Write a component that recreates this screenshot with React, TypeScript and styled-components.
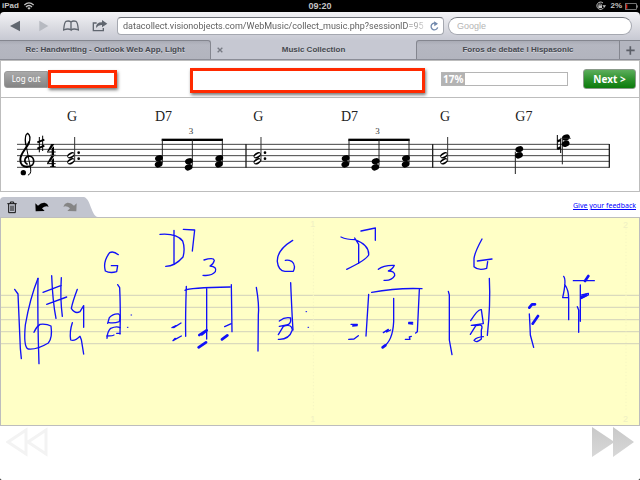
import React from 'react';
import styled, { createGlobalStyle } from 'styled-components';

const Global = createGlobalStyle`
  * { box-sizing: border-box; }
  body { margin: 0; background: #000; font-family: "Liberation Sans", Arial, sans-serif; }
  button, input { font: inherit; margin: 0; padding: 0; border: 0; background: none; }
  svg { display: block; }
`;

const Screen = styled.div`
  min-height: 100vh;
  display: flex;
  flex-direction: column;
`;

const StatusBar = styled.div`
  display: grid;
  grid-template-columns: 1fr auto 1fr;
  align-items: center;
  height: 12px;
  padding: 0 2px;
  color: #c4c4c4;
  font-size: 9px;
  line-height: 12px;
  font-weight: bold;
`;

const StatusGroup = styled.div<{ $end?: boolean }>`
  display: flex;
  align-items: center;
  justify-content: ${p => (p.$end ? 'flex-end' : 'flex-start')};
  gap: ${p => (p.$end ? 3 : 5)}px;
  font-size: 8px;
`;

const Toolbar = styled.div`
  display: grid;
  grid-template-columns: 112px minmax(0, 327fr) minmax(0, 184fr);
  column-gap: 4px;
  align-items: center;
  height: 28px;
  padding: 0 8px 0 1px;
  background: linear-gradient(#f3f3f6, #dcdde3 50%, #c7c9d3);
  border-radius: 4px 4px 0 0;
`;

const ToolButtons = styled.div`
  display: flex;
`;

const IconButton = styled.button`
  display: flex;
  flex: 1;
  height: 24px;
  align-items: center;
  justify-content: center;
`;

const Field = styled.label<{ $round?: boolean }>`
  display: flex;
  align-items: center;
  height: 18px;
  padding: 0 4px 0 ${p => (p.$round ? 8 : 5)}px;
  background: #fff;
  border: 1px solid #a5a8b0;
  border-top-color: #70737a;
  border-radius: ${p => (p.$round ? 9 : 4)}px;
`;

const AddressInput = styled.input`
  flex: 1;
  min-width: 0;
  height: 14px;
  font-family: Roboto, "Liberation Sans", sans-serif;
  font-size: 9px;
  line-height: 14px;
  color: #606060;
  outline: 0;
  mask-image: linear-gradient(90deg, #000 calc(100% - 24px), transparent);
`;

const SearchInput = styled.input`
  flex: 1;
  min-width: 0;
  height: 14px;
  font-size: 9px;
  line-height: 14px;
  outline: 0;
  &::placeholder { color: #b4b4b4; opacity: 1; }
`;

const Tabs = styled.nav`
  display: grid;
  grid-template-columns: 211fr 205fr 204fr 20px;
  height: 20px;
  background: #c6c8d2;
  border-bottom: 1px solid #8b8d97;
`;

const Tab = styled.div<{ $active?: boolean; $side?: 'left' | 'right' }>`
  display: flex;
  align-items: center;
  padding-right: ${p => (p.$active ? 18 : 0)}px;
  background: ${p => (p.$active ? '#c6c8d2' : 'linear-gradient(#a9abb5, #b5b7c1 4px, #b2b4be)')};
  border-top: 1px solid ${p => (p.$active ? '#c6c8d2' : '#84868f')};
  border-right: ${p => (p.$active ? 0 : 1)}px solid #84868f;
  border-left: ${p => (p.$side === 'right' ? 1 : 0)}px solid #84868f;
  border-radius: ${p => (p.$side === 'left' ? '0 3px 0 0' : p.$side === 'right' ? '3px 0 0 0' : '0')};
`;

const TabLabel = styled.button`
  flex: 1;
  height: 18px;
  text-align: center;
  font-size: 8px;
  line-height: 18px;
  font-weight: bold;
  color: #45484f;
  text-shadow: 0 1px 0 #d3d5dc;
  white-space: nowrap;
`;

const CloseButton = styled.button`
  display: flex;
  width: 18px;
  height: 18px;
  align-items: center;
  justify-content: center;
`;

const NewTab = styled.button`
  display: flex;
  align-items: center;
  justify-content: center;
  background: #b3b5bf;
  border-top: 1px solid #84868f;
`;

const Page = styled.main`
  flex: 1;
  display: flex;
  flex-direction: column;
  background: #fff;
  border-radius: 0 0 2px 2px;
`;

const Panel = styled.section`
  border: 1px solid #bdbdbd;
`;

const HeaderRow = styled.header`
  display: flex;
  align-items: center;
  height: 37px;
  padding: 0 3px;
  border-bottom: 1px solid #bdbdbd;
  font-family: "Noto Sans", sans-serif;
`;

const LogOut = styled.button`
  width: 44px;
  height: 17px;
  border: 1px solid #9a9a9a;
  border-radius: 3px 0 0 3px;
  background: linear-gradient(#aaa, #848484);
  color: #fff;
  font-size: 8px;
  line-height: 14px;
`;

const RedBox = styled.div<{ $wide?: boolean }>`
  flex: ${p => (p.$wide ? '1' : '0 0 69px')};
  height: ${p => (p.$wide ? 25 : 18)}px;
  margin: ${p => (p.$wide ? '2px 16px 0 73px' : '0')};
  border: 3px solid #ff2a00;
  background: #fff;
  box-shadow: 1px 2px 3px #0008;
`;

const ProgressTrack = styled.div`
  width: 127px;
  height: 14px;
  border: 1px solid #b5b5b5;
`;

const ProgressBar = styled.div`
  height: 12px;
  padding-left: 1px;
  background: #b3b3b3;
  color: #fff;
  font-size: 10px;
  line-height: 12px;
  font-weight: bold;
  white-space: nowrap;
`;

const NextButton = styled.button`
  width: 53px;
  height: 20px;
  margin-left: 15px;
  border: 1px solid #8a9a8a;
  border-radius: 3px;
  background: linear-gradient(#5cae5c, #2f922f 50%, #0c7c0c);
  color: #fff;
  font-size: 10px;
  line-height: 16px;
  font-weight: bold;
`;

const ScoreArea = styled.div`
  height: 93px;
  overflow: hidden;
`;

const ToolRow = styled.div`
  display: flex;
  justify-content: space-between;
  align-items: flex-start;
  height: 20px;
  margin-top: 5px;
  padding-right: 4px;
`;

const EditTools = styled.div`
  display: flex;
  align-items: center;
  height: 20px;
`;

const EditButton = styled.button`
  display: flex;
  width: 28px;
  height: 20px;
  align-items: center;
  justify-content: flex-start;
  padding-left: 7px;
  background: #c2c5cf;
  &:first-child { border-radius: 4px 0 0 0; }
`;

const FeedbackLink = styled.a`
  margin-top: 3px;
  font-family: "Noto Sans", sans-serif;
  font-size: 7px;
  line-height: 11px;
  color: #00f;
`;

const InkPanel = styled(Panel)`
  height: 209px;
  overflow: hidden;
  background: #ffffc6;
`;

const Pager = styled.footer`
  display: flex;
  justify-content: space-between;
  padding: 1px 6px;
`;

const PagerButton = styled.button`
  display: flex;
  height: 30px;
`;

const ScoreSvg = styled.svg`
  width: 100%;
  height: 100%;
  overflow: visible;
`;

function HalfChord({ x, dotted }: { x: number; dotted?: boolean }) {
  return (
    <g transform={`translate(${x} 0)`}>
      {[151, 169].map(y => (
        <g key={y} transform={`rotate(-30 12 ${y})`}>
          <ellipse cx="12" cy={y} rx="12" ry="8" fill="#000" />
          <ellipse cx="12" cy={y} rx="10" ry="3" fill="#fff" />
        </g>
      ))}
      <path d="M23 96V168" stroke="#333" strokeWidth="3" />
      {dotted && <><circle cx="35" cy="143" r="4" /><circle cx="35" cy="161" r="4" /></>}
    </g>
  );
}

function FilledChord({ x, y }: { x: number; y: number }) {
  return (
    <g>
      <ellipse cx={x + 1} cy={y} rx="12" ry="9" transform={`rotate(-22 ${x} ${y})`} />
      <ellipse cx={x} cy={y + 18} rx="12" ry="9" transform={`rotate(-22 ${x} ${y + 18})`} />
    </g>
  );
}

function Triplet({ x }: { x: number }) {
  return (
    <g transform={`translate(${x} 0)`}>
      <rect x="0" y="101" width="184" height="7" />
      <path d="M2 104V175M92 104V182M182 104V175" stroke="#222" strokeWidth="3" />
      <FilledChord x={-9} y={160} />
      <FilledChord x={81} y={169} />
      <FilledChord x={172} y={160} />
      <text x="81" y="87" fontSize="27" fill="#333">3</text>
    </g>
  );
}

const chords: [number, string][] = [[201, 'G'], [465, 'D7'], [760, 'G'], [1023, 'D7'], [1320, 'G'], [1546, 'G7']];

function Score() {
  return (
    <ScoreSvg viewBox="3 -21 1914 279" preserveAspectRatio="xMinYMin meet" fontFamily="'Liberation Serif', serif" role="img" aria-label="Printed score">
      {chords.map(([x, name]) => <text key={x} x={x} y="48" fontSize="42" fill="#222">{name}</text>)}
      <path d="M51 118H1828M51 133H1828M51 152H1828M51 169H1828M51 187H1828" stroke="#444" strokeWidth="3" />
      <path d="M738 117V188M1298 117V188M1828 117V188" stroke="#222" strokeWidth="4" />
      <g fill="none" stroke="#000" strokeLinecap="round">
        <path d="M77 118Q73 88 83 85Q94 92 87 114" strokeWidth="4" />
        <path d="M87 112C80 132 61 143 61 164C61 180 70 186 82 185" strokeWidth="6" />
        <path d="M80 185C98 185 102 176 101 166C99 151 80 149 75 163C73 170 76 174 81 177" strokeWidth="5" />
        <path d="M77 114L92 192Q94 207 85 210" strokeWidth="3" />
      </g>
      <circle cx="70" cy="203" r="8" />
      <path d="M118 96V142M128 92V138" stroke="#000" strokeWidth="3" />
      <path d="M112 112L133 104M112 131L133 122" stroke="#000" strokeWidth="6" />
      {[0, 35].map(y => (
        <g key={y} transform={`translate(0 ${y})`}>
          <path d="M141 140L154 117H163Q154 132 146 139Z" />
          <path d="M141 141H167" stroke="#000" strokeWidth="3" />
          <path d="M155 130L162 124V149H167V151H150V149H155Z" />
        </g>
      ))}
      <HalfChord x={201} dotted />
      <Triplet x={485} />
      <HalfChord x={760} dotted />
      <Triplet x={1045} />
      <HalfChord x={1320} />
      <path d="M1546 140V207M1687 100V178" stroke="#222" strokeWidth="3" />
      <FilledChord x={1557} y={133} />
      <FilledChord x={1697} y={98} />
      <path d="M1672 90V133M1682 101V144" stroke="#000" strokeWidth="3" />
      <path d="M1672 109L1682 105M1672 132L1682 127" stroke="#000" strokeWidth="7" />
      <path d="M1680 100H1713" stroke="#333" strokeWidth="2" />
    </ScoreSvg>
  );
}

const inkLeft = [
  'M44 223L54 237Q58 330 61 400L64 431',
  'M114 190Q90 250 76 330Q70 395 84 402Q110 405 145 384Q158 368 153 333Q140 326 120 328Q108 336 102 352',
  'M114 190Q112 300 117 446',
  'M155 182Q158 260 168 310M184 188Q180 250 187 304M129 232L184 211M140 268L200 246',
  'M232 223Q218 260 214 280Q225 298 240 290L251 272V337',
  'M217 323Q208 350 212 375Q224 380 240 364L244 374L251 417',
  'M355 119Q340 107 329 113Q308 140 316 168Q330 176 350 170L353 152H334',
  'M353 209L359 218Q362 280 360 357',
  'M323 325L328 308Q340 295 356 297Q363 300 358 320Q340 326 325 322',
  'M321 370Q322 350 332 340Q350 332 360 338M320 363Q340 363 342 360M350 355H360',
  'M480 58Q530 54 548 78Q556 100 549 126Q525 154 497 154M522 46V145',
  'M550 43L584 45L577 108',
  'M612 135Q640 126 643 136Q640 148 630 153Q652 155 646 170Q635 184 609 181',
  'M555 226Q565 218 690 216M559 214Q556 300 557 364M620 222V372M694 209L696 350',
  'M516 338L528 332L521 338L543 324M519 377L525 370M519 377L544 363M674 335L694 326',
];
const inkMiddle = [
  'M109 217Q118 270 115 300L114 408',
  'M218 76Q170 105 172 140Q175 168 195 169H220Q229 150 215 139Q205 134 196 136',
  'M212 203Q216 300 219 345',
  'M178 318Q195 305 212 309Q214 328 200 330L178 334M175 359L190 334Q215 325 217 345Q207 375 175 373',
  'M363 66Q380 74 405 74Q448 90 446 120Q438 135 380 163M404 69L416 88V145',
  'M423 48L466 39V76',
  'M475 163Q490 150 523 151Q519 162 505 168Q526 168 524 182Q515 198 492 196',
  'M455 232Q530 218 606 221M446 238L438 363M521 250V320Q518 380 488 396M598 224L592 350L587 354',
  'M393 328H412L398 333L412 332M386 373L402 372L415 362M490 353L505 343L500 351L512 345',
  'M566 322H578L566 326L578 327M556 373L570 373L568 366L574 364',
  'M685 229L688 240V375L696 419',
];
const inkRight = [
  'M186 72Q165 110 162 130V155Q175 168 200 160L203 140M172 138L216 132',
  'M208 190Q212 270 202 361',
  'M152 317Q175 280 184 284L190 326L154 331H168L151 358M168 332Q192 325 184 345V372Q170 385 162 376Q170 366 190 365',
  'M328 297Q330 330 331 360L341 397',
  'M431 184Q440 195 428 248H446M434 208Q446 225 446 250V314',
  'M460 197H523M481 210V319M472 275L476 285V352',
  'M483 251L505 240V235L485 240',
];
const strokesHeavy = 'M598 360L620 346L606 358M596 397L618 382M666 373L682 361M1148 397L1156 391M1588 278L1596 268H1605M1598 326L1614 303M1755 198L1765 183M1744 247L1758 240';

function Ink() {
  return (
    <ScoreSvg viewBox="3 9 1914 621" preserveAspectRatio="xMinYMin meet" role="img" aria-label="Handwritten score">
      <path d="M0 241H6000M0 277H6000M0 314H6000M0 350H6000M0 386H6000" stroke="#dadabd" strokeWidth="4" />
      <path d="M940 40V590M1878 40V590" stroke="#f5f5c2" strokeWidth="3" strokeDasharray="4 6" />
      <g fill="#efefc4" fontFamily="'Liberation Sans', sans-serif" fontSize="27">
        <text x="931" y="35">1</text><text x="1869" y="38">2</text>
        <text x="931" y="622">1</text><text x="1869" y="622">2</text>
      </g>
      <g fill="none" stroke="#1010f8" strokeWidth="4" strokeLinecap="round" strokeLinejoin="round">
        {inkLeft.map(d => <path key={d} d={d} />)}
        <g transform="translate(660 0)">{inkMiddle.map(d => <path key={d} d={d} />)}</g>
        <g transform="translate(1260 0)">{inkRight.map(d => <path key={d} d={d} />)}</g>
        <path d="M393 300H395M382 337H384M918 290H920M924 337H926" strokeWidth="3" />
        <path d={strokesHeavy} strokeWidth="8" />
      </g>
    </ScoreSvg>
  );
}

const UndoArrow = ({ color, flip }: { color: string; flip?: boolean }) => (
  <svg width="14" height="10" viewBox="0 0 42 30">
    <path transform={flip ? 'translate(42 0) scale(-1 1)' : undefined} fill={color}
      d="M1 4L9 11Q18 1 29 2Q38 4 41 14Q31 10 21 19L29 27L2 28Z" />
  </svg>
);

export default function App() {
  return (
    <Screen>
      <Global />
      <StatusBar>
        <StatusGroup>
          iPad
          <svg width="10" height="8" viewBox="0 0 30 24" fill="none" stroke="#c4c4c4" strokeWidth="4">
            <path d="M1 9Q15 -4 29 9M6 15Q15 6 24 15" /><path d="M10 18Q15 14 20 18L15 23Z" fill="#c4c4c4" stroke="none" />
          </svg>
        </StatusGroup>
        <span>09:20</span>
        <StatusGroup $end>
          <svg width="12" height="10" viewBox="0 0 36 30" fill="none" stroke="#c4c4c4" strokeWidth="3">
            <path d="M24 6A11 11 0 1 0 26 20" /><path d="M22 13H33L28 20Z" fill="#c4c4c4" stroke="none" />
            <rect x="10" y="13" width="11" height="8" fill="#c4c4c4" stroke="none" /><path d="M12 14V9H19V14" strokeWidth="2" />
          </svg>
          <span>2%</span>
          <svg width="13" height="7" viewBox="0 0 39 21">
            <rect x="1" y="2" width="33" height="17" fill="none" stroke="#aaa" strokeWidth="2" />
            <rect x="3" y="4" width="4" height="13" fill="#e02010" /><rect x="35" y="7" width="3" height="7" fill="#aaa" />
          </svg>
        </StatusGroup>
      </StatusBar>
      <Toolbar>
        <ToolButtons>
          <IconButton aria-label="Back"><svg width="14" height="12" viewBox="0 0 42 36"><path d="M6 18L36 2V34Z" fill="#60666f" /></svg></IconButton>
          <IconButton aria-label="Forward"><svg width="14" height="12" viewBox="0 0 42 36"><path d="M10 2L37 18L10 34Z" fill="#b7bac1" /></svg></IconButton>
          <IconButton aria-label="Bookmarks">
            <svg width="16" height="12" viewBox="0 0 48 36" fill="none" stroke="#60666f" strokeWidth="4">
              <path d="M24 30V6Q18 1 9 4Q4 6 2 30Q16 24 24 30ZM24 30V6Q30 1 39 4Q44 6 46 30Q32 24 24 30" />
            </svg>
          </IconButton>
          <IconButton aria-label="Share">
            <svg width="18" height="12" viewBox="0 0 54 36">
              <path d="M20 9H10V32H40V24" fill="none" stroke="#60666f" strokeWidth="4" />
              <path d="M18 24Q17 7 36 7V0L52 11L36 22V15Q25 14 18 24Z" fill="#60666f" />
            </svg>
          </IconButton>
        </ToolButtons>
        <Field>
          <AddressInput aria-label="Address" defaultValue="datacollect.visionobjects.com/WebMusic/collect_music.php?sessionID=95" />
          <svg width="9" height="11" viewBox="0 0 27 33"><path d="M20 9A10 10 0 1 0 23 19" fill="none" stroke="#7289ad" strokeWidth="4" /><path d="M12 1L24 8L13 16Z" fill="#7289ad" /></svg>
        </Field>
        <Field $round><SearchInput aria-label="Search" placeholder="Google" /></Field>
      </Toolbar>
      <Tabs>
        <Tab $side="left"><TabLabel>Re: Handwriting - Outlook Web App, Light</TabLabel></Tab>
        <Tab $active>
          <CloseButton aria-label="Close tab"><svg width="6" height="6" viewBox="0 0 18 18"><path d="M2 2L16 16M16 2L2 16" stroke="#777a83" strokeWidth="4" /></svg></CloseButton>
          <TabLabel>Music Collection</TabLabel>
        </Tab>
        <Tab $side="right"><TabLabel>Foros de debate l Hispasonic</TabLabel></Tab>
        <NewTab aria-label="New tab"><svg width="9" height="9" viewBox="0 0 27 27"><path d="M13 1V26M1 13H26" stroke="#5b5e67" strokeWidth="5" /></svg></NewTab>
      </Tabs>
      <Page>
        <Panel>
          <HeaderRow>
            <LogOut>Log out</LogOut>
            <RedBox />
            <RedBox $wide />
            <ProgressTrack role="progressbar" aria-label="Progress" aria-valuenow={17}>
              <ProgressBar style={{ width: '18%' }}>17%</ProgressBar>
            </ProgressTrack>
            <NextButton>Next &gt;</NextButton>
          </HeaderRow>
          <ScoreArea><Score /></ScoreArea>
        </Panel>
        <ToolRow>
          <EditTools>
            <EditButton aria-label="Clear">
              <svg width="10" height="13" viewBox="0 0 30 39" fill="none" stroke="#111" strokeWidth="3">
                <path d="M1 8H29M10 7V3H20V7M5 9V35H25V9" /><path d="M12 14V30M18 14V30" />
              </svg>
            </EditButton>
            <EditButton aria-label="Undo"><UndoArrow color="#000" /></EditButton>
            <EditButton aria-label="Redo"><UndoArrow color="#858585" flip /></EditButton>
            <svg width="14" height="20" viewBox="0 0 14 20"><path d="M0 0C7 2 7 19 14 20H0Z" fill="#c2c5cf" /></svg>
          </EditTools>
          <FeedbackLink href="#feedback">Give your feedback</FeedbackLink>
        </ToolRow>
        <InkPanel><Ink /></InkPanel>
        <Pager>
          <PagerButton aria-label="Previous page">
            <svg width="42" height="30" viewBox="0 0 42 30"><path d="M20 3V27L2 15ZM40 3V27L22 15Z" fill="#fff" stroke="#f3f3f3" strokeWidth="3" /></svg>
          </PagerButton>
          <PagerButton aria-label="Next page">
            <svg width="42" height="30" viewBox="0 0 42 30">
              <defs><linearGradient id="next" x2="0" y2="1"><stop stopColor="#c8c8c8" /><stop offset="1" stopColor="#d8d8d8" /></linearGradient></defs>
              <path d="M0 0L21 14V0L42 15L21 30V16L0 30Z" fill="url(#next)" />
            </svg>
          </PagerButton>
        </Pager>
      </Page>
    </Screen>
  );
}
